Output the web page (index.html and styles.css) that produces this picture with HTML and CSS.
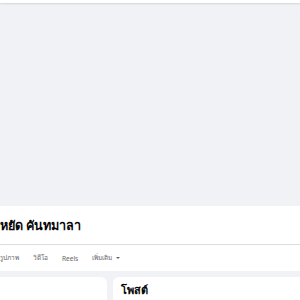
FILE: index.html
```html
<!DOCTYPE html>
<html lang="th">
<head>
<meta charset="utf-8">
<link rel="stylesheet" href="styles.css">
</head>
<body>
<header class="topbar"></header>
<div class="cover"></div>
<section class="profile">
  <h1 class="name">หยัด คันทมาลา</h1>
  <nav class="tabs">
    <span class="tab">รูปภาพ</span>
    <span class="tab">วิดีโอ</span>
    <span class="tab">Reels</span>
    <span class="tab">เพิ่มเติม <span class="caret"></span></span>
  </nav>
</section>
<main class="content">
  <div class="card left"></div>
  <div class="card right"><h2 class="card-title">โพสต์</h2></div>
</main>
</body>
</html>
```
FILE: styles.css
```css
html, body { margin: 0; padding: 0; }
body {
  background: #f0f2f5;
  font-family: "Noto Sans", "Liberation Sans", sans-serif;
  color: #050505;
  width: 300px;
  height: 300px;
  overflow: hidden;
}
.topbar {
  height: 3px;
  background: #fff;
  box-shadow: 0 1px 2px rgba(0,0,0,0.12);
  position: relative;
  z-index: 1;
}
.cover { height: 203px; background: #f0f2f5; }
.profile { background: #fff; height: 65px; }
.name {
  margin: 0;
  height: 37px;
  line-height: 37px;
  font-size: 12.6px;
  font-weight: 700;
  white-space: nowrap;
  border-bottom: 1px solid #dadde1;
  padding-top: 1px;
}
.tabs {
  display: flex;
  gap: 14px;
  margin-left: 0;
  height: 26px;
  align-items: center;
  font-size: 6.5px;
  color: #65676b;
  white-space: nowrap;
}
.tab { display: flex; align-items: center; gap: 4px; }
.caret {
  width: 0; height: 0;
  border-left: 2px solid transparent;
  border-right: 2px solid transparent;
  border-top: 2.5px solid #65676b;
}
.content {
  display: flex;
  gap: 6px;
  padding-top: 6px;
  width: 400px;
}
.card { background: #fff; border-radius: 6px; height: 60px; flex-shrink: 0; }
.left { width: 107px; border-top-left-radius: 0; }
.right { width: 270px; padding: 5px 8px; }
.card-title { margin: 0; font-size: 11px; font-weight: 700; line-height: 16px; }
```
